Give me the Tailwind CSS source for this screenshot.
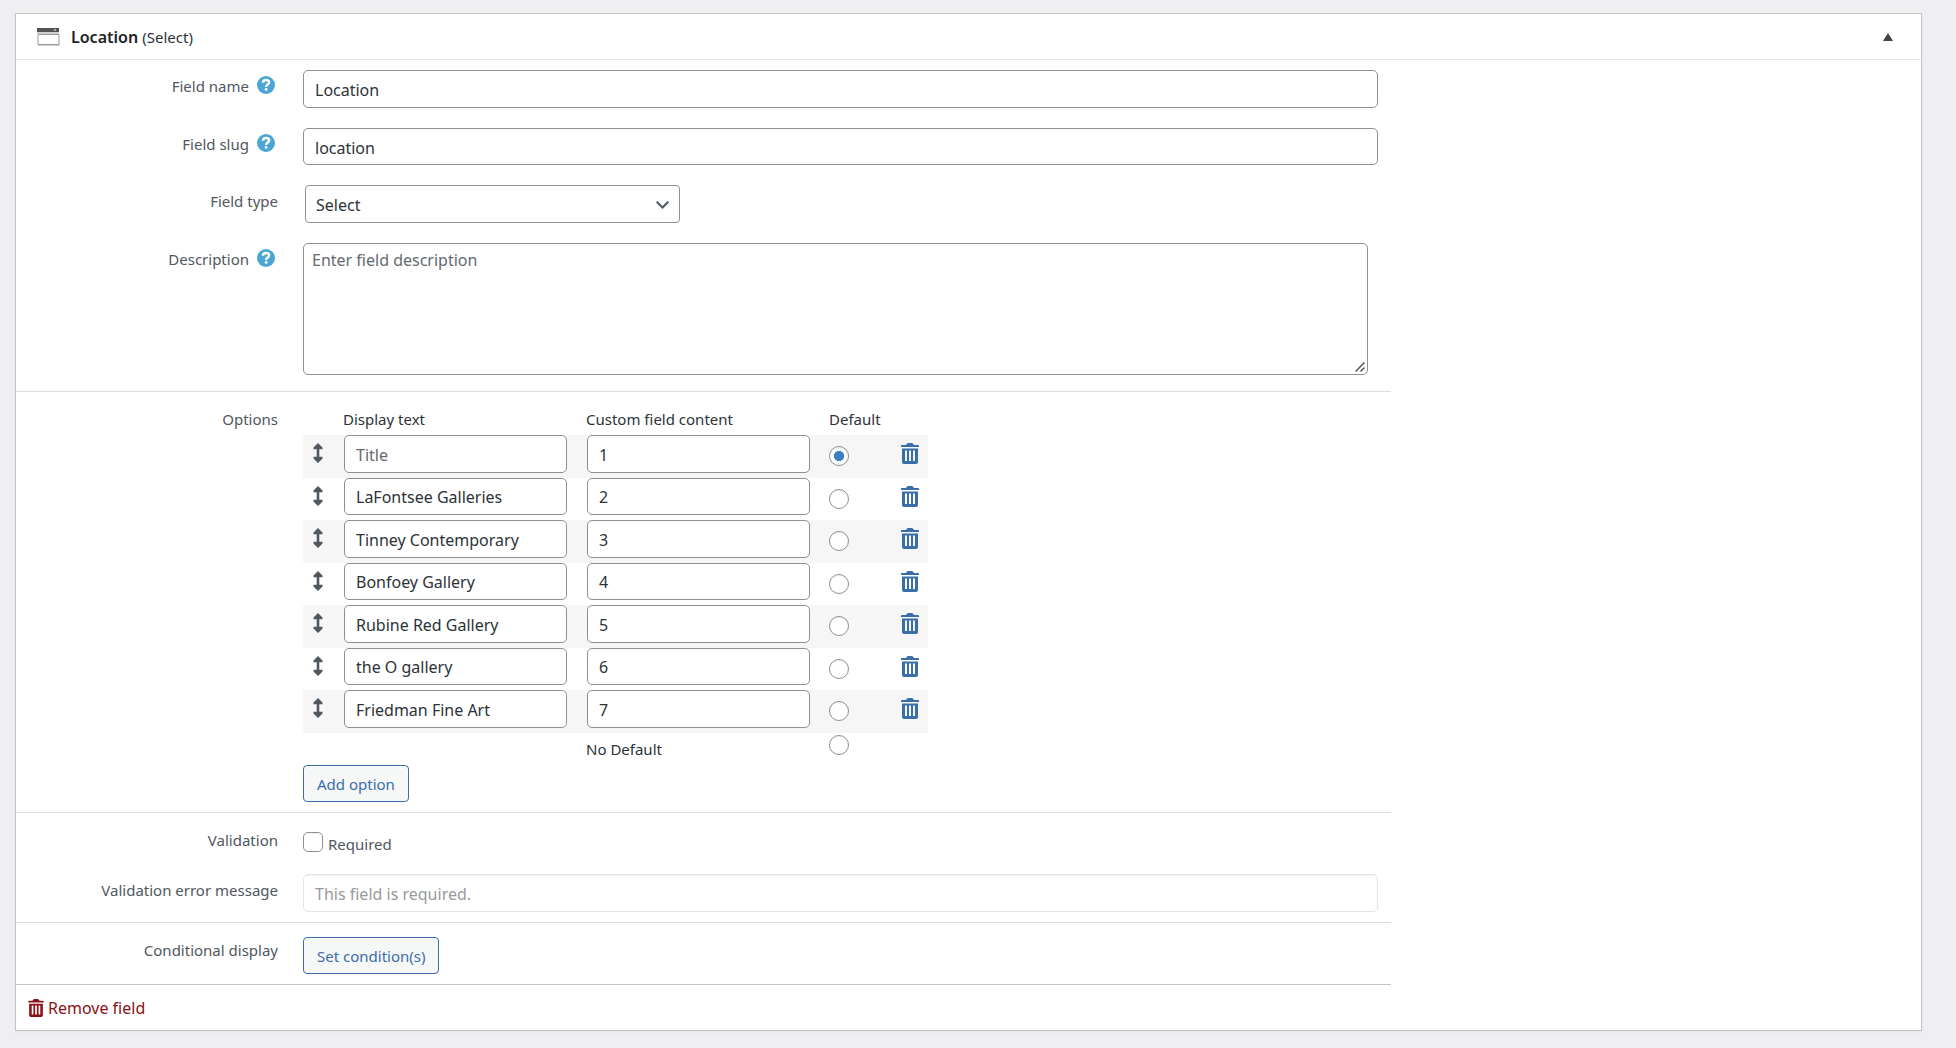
<!DOCTYPE html>
<html lang="en">
<head>
  <meta charset="UTF-8" />
  <meta name="viewport" content="width=device-width, initial-scale=1.0"/>
  <title>Edit Field | Location</title>
  <script src="https://cdn.jsdelivr.net/npm/@tailwindcss/browser@4"></script>
</head>
<body class="min-h-screen bg-[#efeff1] px-[15px] pt-[13px] pb-4 font-['Noto_Sans','Open_Sans',sans-serif] text-[15px] leading-6 text-[#2c3338]">

  <!-- ICONS -->
  <svg class="hidden">
    <symbol id="icon-trash" viewBox="0 0 18 21">
      <path fill="currentColor" fill-rule="evenodd" d="M5 2C5.500.8 6.500 0 7.500 0h3c1 0 2 .8 2.500 2h4.200a.8.8 0 0 1 .8.8V4H0V2.800A.8.8 0 0 1 .8 2zM1 5.500h16V19a2 2 0 0 1-2 2H3a2 2 0 0 1-2-2zM4 7.500V18h2V7.500zm4 0V18h2V7.500zm4 0V18h2V7.500z"/>
    </symbol>
    <symbol id="icon-sort" viewBox="0 0 10 20">
      <path fill="currentColor" d="M5 0l4.500 4.500v1.700H6.300v7.600h3.200v1.700L5 20l-4.500-4.500v-1.700h3.200V6.200H.5V4.500z"/>
    </symbol>
    <symbol id="icon-help" viewBox="0 0 18 18">
      <circle cx="9" cy="9" r="9" fill="#4ca6d4"/>
      <path fill="none" stroke="#fff" stroke-width="2.400" d="M5.900 6.700C6 4.900 7.300 4 9.100 4c1.800 0 3 .9 3 2.400 0 2.100-3 2.100-3 4.500"/>
      <circle cx="9.100" cy="13.400" r="1.400" fill="#fff"/>
    </symbol>
  </svg>

  <main class="mr-[19px] border border-[#c3c4c7] bg-white shadow-xs">

    <!-- HEADER -->
    <header class="flex h-[46px] items-center border-b border-[#e8e8ea] pr-7 pl-[21px]">
      <svg class="mr-[11px] h-5 w-[23px]" viewBox="0 0 23 20">
        <path fill="#555" d="M0 1h22v4H0z"/>
        <path fill="#d0d0d0" d="M0 5h22v2H0zM1 18h22v1H1z"/>
        <path fill="#fff" d="M17 2.500h2v1h-2z"/>
        <path fill="none" stroke="#999" d="M1 7.500h21v10H1z"/>
      </svg>
      <h2 class="text-base font-semibold text-[#1d2327]">Location <span class="text-[15px] font-normal text-[#2c3338]">(Select)</span></h2>
      <button type="button" aria-label="Toggle field settings" class="ml-auto">
        <svg class="h-2 w-[10px]" viewBox="0 0 10 8"><path fill="#3c434a" d="M5 0l5 8H0z"/></svg>
      </button>
    </header>

    <form class="text-[#50575e]">

      <!-- GENERAL -->
      <section class="grid max-w-[1375px] grid-cols-[262px_1fr] gap-x-[25px] gap-y-5 border-b border-[#dcdcde] pt-[10px] pr-[13px] pb-4">
        <div class="flex items-start justify-end pt-1 pr-[3px]">
          <label for="fieldName">Field name</label>
          <button type="button" aria-label="Field name help" class="mt-[2px] ml-2"><svg class="size-[18px]"><use href="#icon-help"/></svg></button>
        </div>
        <input id="fieldName" type="text" value="Location" class="h-[38px] w-full rounded-[5px] border border-[#8c8f94] px-[11px] pt-[2px] text-base text-[#2c3338]" />

        <div class="flex items-start justify-end pt-1 pr-[3px]">
          <label for="fieldSlug">Field slug</label>
          <button type="button" aria-label="Field slug help" class="mt-[2px] ml-2"><svg class="size-[18px]"><use href="#icon-help"/></svg></button>
        </div>
        <input id="fieldSlug" type="text" value="location" class="h-[37px] w-full rounded-[5px] border border-[#8c8f94] px-[11px] pt-[2px] text-base text-[#2c3338]" />

        <label for="fieldType" class="pt-1 text-right">Field type</label>
        <div class="relative ml-[2px] w-[375px]">
          <select id="fieldType" class="h-[38px] w-full appearance-none rounded border border-[#8c8f94] bg-white px-[10px] pt-[2px] text-base text-[#2c3338]">
            <option>Select</option>
          </select>
          <svg class="pointer-events-none absolute top-4 right-[11px] h-2 w-[13px]" viewBox="0 0 13 8"><path fill="none" stroke="#50575e" stroke-width="2" d="M.7.7l5.800 5.800L12.300.7"/></svg>
        </div>

        <div class="flex items-start justify-end pt-1 pr-[3px]">
          <label for="description">Description</label>
          <button type="button" aria-label="Description help" class="mt-[2px] ml-2"><svg class="size-[18px]"><use href="#icon-help"/></svg></button>
        </div>
        <div class="relative flex pr-[10px]">
          <textarea id="description" placeholder="Enter field description" class="h-[132px] w-full resize-none rounded-[5px] border border-[#8c8f94] px-2 py-1 text-base text-[#2c3338] placeholder:text-[#646970]"></textarea>
          <svg class="pointer-events-none absolute right-[13px] bottom-[3px] size-[10px]" viewBox="0 0 10 10"><path fill="none" stroke="#50575e" stroke-width="1.500" d="M.5 9.500l9-9M5.500 9.500l4-4"/></svg>
        </div>
      </section>

      <!-- OPTIONS -->
      <section class="grid max-w-[1375px] grid-cols-[262px_1fr] gap-x-[25px] border-b border-[#dcdcde] pt-[11px] pb-[10px]">
        <span class="pt-1 text-right">Options</span>
        <div>
          <table class="w-[625px] table-fixed text-left text-[#2c3338] [&_td]:p-0 [&_td]:align-top [&_th]:font-normal">
            <thead>
              <tr class="h-8">
                <th class="w-[40px]"></th>
                <th class="w-[243px]">Display text</th>
                <th class="w-[243px]">Custom field content</th>
                <th class="w-[72px]">Default</th>
                <th></th>
              </tr>
            </thead>
            <tbody class="[&_input[type=text]]:ml-px [&_input[type=text]]:w-[223px] [&_input[type=text]]:rounded-[5px] [&_input[type=text]]:border [&_input[type=text]]:border-[#8c8f94] [&_input[type=text]]:bg-white [&_input[type=text]]:px-[11px] [&_input[type=text]]:pt-px [&_input[type=text]]:text-base [&_input[type=radio]]:mt-[11px] [&_input[type=radio]]:block [&_input[type=radio]]:size-5 [&_input[type=radio]]:appearance-none [&_input[type=radio]]:rounded-full [&_input[type=radio]]:border [&_input[type=radio]]:border-[#8c8f94] [&_input[type=radio]]:bg-white [&_input[type=radio]]:inset-shadow-xs [&_input:checked]:bg-radial [&_input:checked]:from-[#3b7fc4] [&_input:checked]:from-38% [&_input:checked]:to-white [&_input:checked]:to-42% [&_button]:mt-2 [&_button]:block [&_button]:text-[#3a6ea8] [&_tr]:h-[42px] [&_tr:nth-child(odd)]:h-[43px] [&_tr:nth-child(odd)]:bg-[#f6f6f7] [&_input[type=text]]:h-[37px] [&_tr:nth-child(odd)_input[type=text]]:h-[38px]">
              <tr>
                <td class="pt-2! pl-[10px]!"><svg class="h-5 w-[10px] text-[#50575e]"><use href="#icon-sort"/></svg></td>
                <td><input type="text" aria-label="Display text 1" placeholder="Title" class="placeholder:text-[#646970]" /></td>
                <td><input type="text" aria-label="Content 1" value="1" /></td>
                <td><input type="radio" name="default" aria-label="Default 1" checked /></td>
                <td><button type="button" aria-label="Delete option 1"><svg class="h-[21px] w-[18px]"><use href="#icon-trash"/></svg></button></td>
              </tr>
              <tr>
                <td class="pt-2! pl-[10px]!"><svg class="h-5 w-[10px] text-[#50575e]"><use href="#icon-sort"/></svg></td>
                <td><input type="text" aria-label="Display text 2" value="LaFontsee Galleries" /></td>
                <td><input type="text" aria-label="Content 2" value="2" /></td>
                <td><input type="radio" name="default" aria-label="Default 2" /></td>
                <td><button type="button" aria-label="Delete option 2"><svg class="h-[21px] w-[18px]"><use href="#icon-trash"/></svg></button></td>
              </tr>
              <tr>
                <td class="pt-2! pl-[10px]!"><svg class="h-5 w-[10px] text-[#50575e]"><use href="#icon-sort"/></svg></td>
                <td><input type="text" aria-label="Display text 3" value="Tinney Contemporary" /></td>
                <td><input type="text" aria-label="Content 3" value="3" /></td>
                <td><input type="radio" name="default" aria-label="Default 3" /></td>
                <td><button type="button" aria-label="Delete option 3"><svg class="h-[21px] w-[18px]"><use href="#icon-trash"/></svg></button></td>
              </tr>
              <tr>
                <td class="pt-2! pl-[10px]!"><svg class="h-5 w-[10px] text-[#50575e]"><use href="#icon-sort"/></svg></td>
                <td><input type="text" aria-label="Display text 4" value="Bonfoey Gallery" /></td>
                <td><input type="text" aria-label="Content 4" value="4" /></td>
                <td><input type="radio" name="default" aria-label="Default 4" /></td>
                <td><button type="button" aria-label="Delete option 4"><svg class="h-[21px] w-[18px]"><use href="#icon-trash"/></svg></button></td>
              </tr>
              <tr>
                <td class="pt-2! pl-[10px]!"><svg class="h-5 w-[10px] text-[#50575e]"><use href="#icon-sort"/></svg></td>
                <td><input type="text" aria-label="Display text 5" value="Rubine Red Gallery" /></td>
                <td><input type="text" aria-label="Content 5" value="5" /></td>
                <td><input type="radio" name="default" aria-label="Default 5" /></td>
                <td><button type="button" aria-label="Delete option 5"><svg class="h-[21px] w-[18px]"><use href="#icon-trash"/></svg></button></td>
              </tr>
              <tr>
                <td class="pt-2! pl-[10px]!"><svg class="h-5 w-[10px] text-[#50575e]"><use href="#icon-sort"/></svg></td>
                <td><input type="text" aria-label="Display text 6" value="the O gallery" /></td>
                <td><input type="text" aria-label="Content 6" value="6" /></td>
                <td><input type="radio" name="default" aria-label="Default 6" /></td>
                <td><button type="button" aria-label="Delete option 6"><svg class="h-[21px] w-[18px]"><use href="#icon-trash"/></svg></button></td>
              </tr>
              <tr>
                <td class="pt-2! pl-[10px]!"><svg class="h-5 w-[10px] text-[#50575e]"><use href="#icon-sort"/></svg></td>
                <td><input type="text" aria-label="Display text 7" value="Friedman Fine Art" /></td>
                <td><input type="text" aria-label="Content 7" value="7" /></td>
                <td><input type="radio" name="default" aria-label="Default 7" /></td>
                <td><button type="button" aria-label="Delete option 7"><svg class="h-[21px] w-[18px]"><use href="#icon-trash"/></svg></button></td>
              </tr>
            </tbody>
            <tfoot>
              <tr class="h-8">
                <td></td>
                <td></td>
                <td class="pt-1!"><label for="noDefault">No Default</label></td>
                <td class="pt-[2px]!"><input id="noDefault" type="radio" name="default" class="block size-5 appearance-none rounded-full border border-[#8c8f94] bg-white inset-shadow-xs" /></td>
                <td></td>
              </tr>
            </tfoot>
          </table>
          <button type="button" class="block h-[37px] rounded border border-[#3a6ea8] bg-[#f6f7f7] px-[13px] text-[#3a6ea8]">Add option</button>
        </div>
      </section>

      <!-- VALIDATION -->
      <section class="grid max-w-[1375px] grid-cols-[262px_1fr] gap-x-[25px] gap-y-5 border-b border-[#dcdcde] pt-[11px] pr-[13px] pb-[10px]">
        <span class="pt-1 text-right">Validation</span>
        <div class="flex h-[30px] items-start pt-2">
          <input id="required" type="checkbox" class="size-5 appearance-none rounded-[5px] border border-[#8c8f94] bg-white inset-shadow-xs" />
          <label for="required" class="ml-[5px]">Required</label>
        </div>

        <label for="errorMessage" class="pt-1 text-right">Validation error message</label>
        <input id="errorMessage" type="text" placeholder="This field is required." disabled class="h-[38px] w-full rounded-[5px] border border-[#e2e3e5] bg-white px-[11px] pt-[2px] text-base inset-shadow-xs placeholder:text-[#98999c]" />
      </section>

      <!-- CONDITIONAL DISPLAY -->
      <section class="grid max-w-[1375px] grid-cols-[262px_1fr] gap-x-[25px] border-b border-[#c3c4c7] pt-[11px] pb-[10px]">
        <span class="pt-1 text-right">Conditional display</span>
        <div class="pt-[3px]">
          <button type="button" class="block h-[37px] rounded border border-[#3a6ea8] bg-[#f6f7f7] px-[13px] text-[#3a6ea8]">Set condition(s)</button>
        </div>
      </section>

      <!-- REMOVE -->
      <footer class="flex h-[45px] items-center pl-3">
        <button type="button" class="flex items-center gap-1 text-base text-[#8a1116]">
          <svg class="h-[18px] w-4"><use href="#icon-trash"/></svg>
          Remove field
        </button>
      </footer>
    </form>
  </main>
</body>
</html>
